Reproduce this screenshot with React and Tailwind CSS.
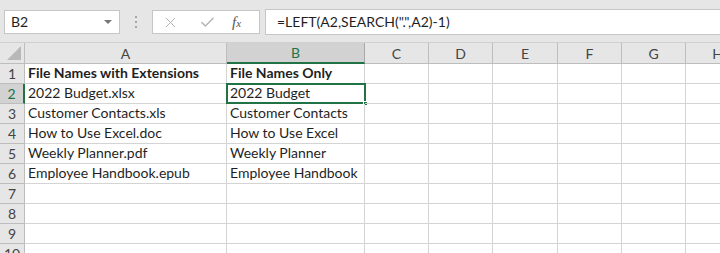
import React from "react";
import { X, Check } from "lucide-react";

const columns = [
  { name: "A", w: "w-[202px]" },
  { name: "B", w: "w-[138px]" },
  { name: "C", w: "w-[64px]" },
  { name: "D", w: "w-[64px]" },
  { name: "E", w: "w-[65px]" },
  { name: "F", w: "w-[64px]" },
  { name: "G", w: "w-[64px]" },
  { name: "H", w: "w-[64px]" },
];

const rows = [
  ["File Names with Extensions", "File Names Only"],
  ["2022 Budget.xlsx", "2022 Budget"],
  ["Customer Contacts.xls", "Customer Contacts"],
  ["How to Use Excel.doc", "How to Use Excel"],
  ["Weekly Planner.pdf", "Weekly Planner"],
  ["Employee Handbook.epub", "Employee Handbook"],
  ["", ""],
  ["", ""],
  ["", ""],
  ["", ""],
];

export default function App() {
  return (
    <div className="w-[720px] h-[253px] overflow-hidden bg-white font-['Lato','Open_Sans',sans-serif] text-[#1f1f1f]">
      {/* Toolbar: name box + formula bar */}
      <div className="h-[43px] bg-[#e6e6e6] flex items-start pt-[9px] border-b border-[#d0d0d0]">
        <div className="ml-[4px] mt-[1px] w-[116px] h-[24px] bg-white border border-[#c6c6c6] flex items-center justify-between pl-[6px] pr-[7px]">
          <span className="text-[14px] leading-none">B2</span>
          <span className="w-0 h-0 border-l-[4px] border-r-[4px] border-t-[4px] border-l-transparent border-r-transparent border-t-[#777]" />
        </div>
        <div className="w-[32px] h-[26px] flex flex-col items-center justify-center gap-[3px]">
          <span className="w-[2px] h-[2px] bg-[#a5a5a5]" />
          <span className="w-[2px] h-[2px] bg-[#a5a5a5]" />
          <span className="w-[2px] h-[2px] bg-[#a5a5a5]" />
        </div>
        <div className="mt-[1px] w-[108px] h-[24px] bg-white border border-[#c6c6c6] flex items-center pl-[9px]">
          <X size={17} strokeWidth={1.4} className="text-[#b3b3b3]" />
          <Check size={17} strokeWidth={2} className="text-[#b3b3b3] ml-[20px]" />
          <span className="ml-[16px] font-['Liberation_Serif',serif] italic text-[#555] text-[15px] leading-none">
            f<span className="text-[11px]">x</span>
          </span>
        </div>
        <div className="ml-[5px] flex-1 h-[26px] bg-white border border-r-0 border-[#c6c6c6] flex items-center pl-[11px]">
          <span className="text-[14px] leading-none">=LEFT(A2,SEARCH(".",A2)-1)</span>
        </div>
      </div>

      {/* Column headers */}
      <div className="flex h-[21px] bg-[#e6e6e6]">
        <div className="relative w-[25px] shrink-0 border-r border-b border-[#bdbdbd]">
          <svg className="absolute left-[7px] top-[3px]" width="14" height="14" viewBox="0 0 14 14">
            <polygon points="14,0 14,14 0,14" fill="#b8b8b8" />
          </svg>
        </div>
        {columns.map((c) => (
          <div
            key={c.name}
            className={`${c.w} shrink-0 flex items-center justify-center text-[14px] border-r ${
              c.name === "B"
                ? "bg-[#d2d2d2] text-[#217346] border-b-2 border-b-[#217346] border-r-[#a8a8a8]"
                : "text-[#444] border-b border-[#bdbdbd]"
            }`}
          >
            {c.name}
          </div>
        ))}
      </div>

      {/* Rows */}
      {rows.map((r, i) => (
        <div key={i} className="flex h-[20px]">
          <div
            className={`w-[25px] shrink-0 flex items-center justify-center text-[14px] border-b ${
              i === 1
                ? "bg-[#d2d2d2] text-[#217346] border-r-2 border-r-[#217346] border-b-[#bdbdbd]"
                : "bg-[#e6e6e6] text-[#444] border-r border-[#bdbdbd]"
            }`}
          >
            {i + 1}
          </div>
          {columns.map((c, j) => (
            <div
              key={c.name}
              className={`${c.w} shrink-0 relative border-r border-b border-[#d4d4d4] flex items-end pl-[3px] pb-[1px] text-[14px] leading-[18px] whitespace-nowrap ${
                i === 0 ? "font-bold" : ""
              }`}
            >
              {j === 0 ? r[0] : j === 1 ? r[1] : ""}
              {i === 1 && j === 1 && (
                <>
                  <div className="absolute left-[-1px] top-[-1px] right-[-2px] bottom-[-1px] border-2 border-[#217346]" />
                  <div className="absolute right-[-4px] bottom-[-3px] w-[5px] h-[5px] bg-[#217346] border border-white" />
                </>
              )}
            </div>
          ))}
        </div>
      ))}
    </div>
  );
}
